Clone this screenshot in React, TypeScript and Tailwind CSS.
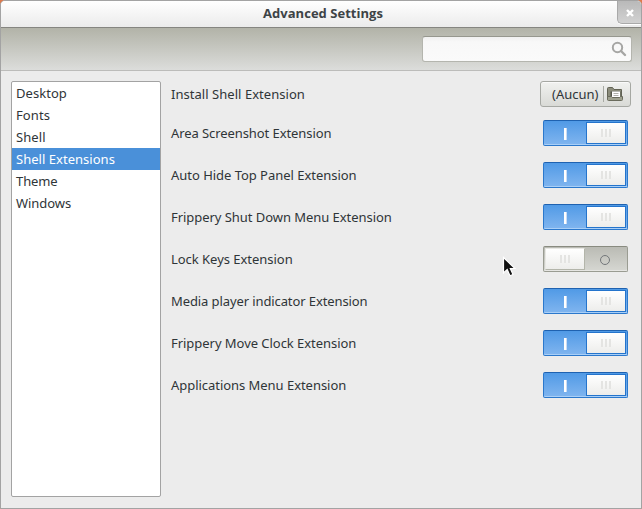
import React from 'react';

const categories = [
  { name: 'Desktop', tracking: 'tracking-[0.05px]' },
  { name: 'Fonts', tracking: 'tracking-[0.1px]' },
  { name: 'Shell', tracking: 'tracking-[0.1px]' },
  { name: 'Shell Extensions', tracking: 'tracking-[0.03px]' },
  { name: 'Theme', tracking: 'tracking-[-0.1px]' },
  { name: 'Windows', tracking: 'tracking-[-0.05px]' },
];

const extensions = [
  { name: 'Area Screenshot Extension', on: true, tracking: 'tracking-[-0.08px]' },
  { name: 'Auto Hide Top Panel Extension', on: true, tracking: 'tracking-[-0.03px]' },
  { name: 'Frippery Shut Down Menu Extension', on: true, tracking: 'tracking-[-0.05px]' },
  { name: 'Lock Keys Extension', on: false, tracking: 'tracking-[-0.03px]' },
  { name: 'Media player indicator Extension', on: true, tracking: 'tracking-[-0.1px]' },
  { name: 'Frippery Move Clock Extension', on: true, tracking: 'tracking-[-0.04px]' },
  { name: 'Applications Menu Extension', on: true, tracking: 'tracking-[-0.04px]' },
];

function Grip() {
  return (
    <span className="flex gap-[2px]">
      <i className="h-2 w-[2px] bg-[#e4e4e2]" />
      <i className="h-2 w-[2px] bg-[#e4e4e2]" />
      <i className="h-2 w-[2px] bg-[#e4e4e2]" />
    </span>
  );
}

function Switch({ on }: { on: boolean }) {
  if (on) {
    return (
      <button className="flex h-[26px] w-[85px] rounded-[2px] border border-[#2b78cc] border-t-[#1f62b0] bg-linear-to-b from-[#509ae6] to-[#80b5ef] shadow-[inset_0_-1px_0_#a9cff7]">
        <span className="flex h-6 w-[42px] items-center justify-center pt-[2px]">
          <i className="h-3 w-[3px] border-r border-[#c9dcf5] bg-white" />
        </span>
        <span className="mt-px flex h-[22px] w-10 items-center justify-center border border-[#2474cc] bg-linear-to-b from-white to-[#ededeb]">
          <Grip />
        </span>
      </button>
    );
  }
  return (
    <button className="flex h-[26px] w-[85px] rounded-[2px] border border-[#9a9c92] border-t-[#898b80] bg-linear-to-b from-[#babbb4] to-[#d6d7d2] shadow-[inset_0_-1px_0_#e6e6e3]">
      <span className="ml-px mt-px flex h-[22px] w-10 items-center justify-center border border-[#b3b5aa] border-t-[#e8e8e4] border-l-[#e8e8e4] bg-linear-to-b from-white to-[#ededeb]">
        <Grip />
      </span>
      <span className="flex h-6 w-[42px] items-center justify-center pt-[2px] pr-[2px]">
        <i className="size-[10px] rounded-full border border-[#73777a]" />
      </span>
    </button>
  );
}

function FolderIcon() {
  return (
    <svg className="shrink-0" width="16" height="14" viewBox="0 0 16 14">
      <path d="M.5 12.500V1.500Q.5.500 1.500.500H5.500L7 2.500H14.500V12.500Z" fill="#8b8c7b" stroke="#626354" />
      <path d="M3.500 9.500V4.500H13.500V9.500Z" fill="#55564a" />
      <path d="M5 10V4.500H13V10Z" fill="#fff" />
      <path d="M6.500 6.500H11.500M6.500 8.500H11.500" stroke="#b0b0aa" />
      <path d="M.5 9.500H4.500L5.500 10.500H12.500L13.500 9.500H15.500V12.500Q15.500 13.500 14.500 13.500H1.500Q.5 13.500.5 12.500Z" fill="#a0a290" stroke="#6a6b5c" />
    </svg>
  );
}

export default function App() {
  return (
    <div className="h-[509px] w-[642px] bg-[#de7a4d]">
      <div className="relative flex h-full w-full flex-col overflow-hidden rounded-t-[5px] border border-[#a3a3a3] bg-[#ececec] font-['Noto_Sans','Open_Sans',sans-serif] text-[13px] leading-[22px] text-[#2f3538]">
        <header className="flex h-[27px] shrink-0 border-b border-[#858580] bg-linear-to-b from-white to-[#ebebeb]">
          <h1 className="flex-1 pl-7 text-center font-['Open_Sans',sans-serif] text-[13px] leading-[25px] font-bold text-[#3d4346]">
            <span className="tracking-[0.03px]">Advanced Settings</span>
          </h1>
          <button className="flex h-[23px] w-6 items-center justify-center rounded-bl-[5px] border-b border-l border-[#a9a9a9] bg-linear-to-b from-[#b9b9b9] to-[#d2d2d2] pt-px shadow-[0_1px_0_#fff]">
            <svg width="8" height="8" viewBox="0 0 8 8">
              <path d="M1 1L7 7M7 1L1 7" stroke="#fff" strokeWidth="2.4" />
            </svg>
          </button>
        </header>
        <div className="flex h-[43px] shrink-0 justify-end border-b border-[#bcbcba] bg-linear-to-b from-[#b2b3a8] to-[#dcdddb] pt-2 pr-[9px]">
          <label className="flex h-[26px] w-[210px] items-center justify-end rounded-[3px] border border-[#b4b5ae] border-t-[#96978e] bg-linear-to-b from-[#f0f0f0] via-[#f8f8f8] via-20% to-[#fafafa] pr-1">
            <svg width="16" height="16" viewBox="0 0 16 16" fill="none" stroke="#a6a6a4">
              <circle cx="6.500" cy="6.500" r="4.700" strokeWidth="2" />
              <path d="M10 10L14 14" strokeWidth="2.400" strokeLinecap="round" />
            </svg>
          </label>
        </div>
        <main className="flex flex-1 gap-[10px] pt-[10px] pr-[10px] pb-[11px] pl-[10px]">
          <nav className="w-[150px] rounded-[2px] border border-[#a3a3a3] bg-white">
            {categories.map((c) => (
              <div key={c.name} className={'flex h-[22px] items-center pl-1 whitespace-nowrap ' + c.tracking + (c.name === 'Shell Extensions' ? ' bg-[#4a90d9] text-white' : '')}>
                <span>{c.name}</span>
              </div>
            ))}
          </nav>
          <section className="flex-1">
            <div className="mb-[13px] flex h-[26px] items-center justify-between">
              <span className="tracking-[0.04px]">Install Shell Extension</span>
              <button className="flex h-[26px] w-[91px] items-center rounded-[3px] border border-[#a6a8a3] bg-linear-to-b from-[#f1f2f0] to-[#d9dad6] pl-[11px] shadow-[inset_0_1px_0_#fafafa]">
                <span className="w-[50px] text-left whitespace-nowrap">(Aucun)</span>
                <i className="mx-px mr-[3px] h-4 w-px bg-[#a8aaa4]" />
                <FolderIcon />
              </button>
            </div>
            <div className="flex flex-col gap-4 pr-[3px]">
              {extensions.map((e) => (
                <div key={e.name} className="flex h-[26px] items-center justify-between">
                  <span className={e.tracking}>{e.name}</span>
                  <Switch on={e.on} />
                </div>
              ))}
            </div>
          </section>
        </main>
        <svg className="absolute top-[255px] left-[501px]" width="15" height="22" viewBox="0 0 15 22">
          <path d="M1.500 1.500V17L5.200 13.600L8 19.800L11 18.500L8.300 12.500H13Z" fill="#111" stroke="#fff" strokeWidth="1.200" />
        </svg>
      </div>
    </div>
  );
}
